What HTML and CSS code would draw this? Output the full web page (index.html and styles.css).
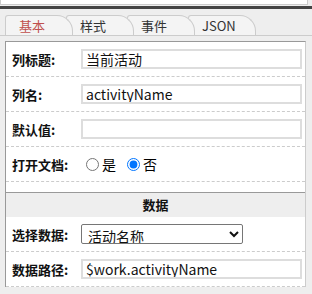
FILE: index.html
```html
<!DOCTYPE html>
<html>
<head>
<meta charset="utf-8">
<link rel="stylesheet" href="styles.css">
</head>
<body>
<div class="topbox"></div>
<div class="darkbar"></div>
<div class="tabs">
  <div class="tab active">基本</div>
  <div class="tab t2">样式</div>
  <div class="tab t3">事件</div>
  <div class="tab t4">JSON</div>
</div>
<div class="panel">
  <div class="row">
    <div class="label">列标题:</div>
    <input class="field" type="text" value="当前活动">
  </div>
  <div class="row">
    <div class="label">列名:</div>
    <input class="field" type="text" value="activityName">
  </div>
  <div class="row">
    <div class="label">默认值:</div>
    <input class="field" type="text" value="">
  </div>
  <div class="row">
    <div class="label">打开文档:</div>
    <label class="radio"><input type="radio" name="doc">是</label>
    <label class="radio"><input type="radio" name="doc" checked>否</label>
  </div>
  <div class="spacer"></div>
  <div class="section">数据</div>
  <div class="row">
    <div class="label">选择数据:</div>
    <select class="sel"><option>活动名称</option></select>
  </div>
  <div class="row">
    <div class="label">数据路径:</div>
    <input class="field" type="text" value="$work.activityName">
  </div>
</div>
</body>
</html>
```
FILE: styles.css
```css
html, body {
  margin: 0;
  padding: 0;
  background: #eeeeee;
  font-family: "Noto Sans CJK SC", "Noto Sans", sans-serif;
  overflow: hidden;
}
.topbox {
  width: 306px;
  height: 4px;
  background: #fff;
  border: 1px solid #cccccc;
  border-top: none;
}
.darkbar {
  margin-top: 1px;
  height: 3px;
  background: #444444;
}
.tabs {
  display: flex;
  margin-top: 6px;
  padding-left: 5px;
  height: 20px;
  border-bottom: 1px solid #cccccc;
}
.tab {
  position: relative;
  flex: none;
  width: 53px;
  height: 19px;
  padding-left: 13px;
  border: 1px solid #cccccc;
  border-bottom: none;
  border-radius: 3px 16px 0 0;
  background: #f4f4f4;
  font-size: 13px;
  line-height: 19px;
  color: #333;
  margin-right: -7px;
}
.tab.active { color: #c0504d; z-index: 4; }
.tab.t2 { z-index: 3; }
.tab.t3 { z-index: 2; }
.tab.t4 { z-index: 1; }
.panel {
  margin-top: 5px;
  margin-left: 5px;
  width: 299px;
  background: #fff;
  border-top: 1px solid #999999;
  border-left: 1px solid #999999;
  border-right: 1px solid #cccccc;
}
.row {
  display: flex;
  align-items: center;
  height: 34px;
  border-bottom: 1px dashed #cccccc;
}
.label {
  width: 69px;
  padding-left: 6px;
  font-size: 13px;
  font-weight: bold;
  color: #111;
  flex: none;
}
.field {
  box-sizing: border-box;
  width: 221px;
  height: 20px;
  margin: 0;
  padding: 0 3px;
  border: 1px solid #dddddd;
  border-width: 2px 2px 2px 2px;
  font-family: "Noto Sans CJK SC", "Noto Sans", sans-serif;
  font-size: 14px;
  color: #111;
  outline: none;
}
.radio {
  display: flex;
  align-items: center;
  font-size: 14px;
  margin-right: 6px;
}
.radio input {
  margin: 0 3px 0 5px;
  width: 13px;
  height: 13px;
}
.spacer { height: 10px; }
.section {
  height: 24px;
  line-height: 24px;
  background: #eeeeee;
  border-top: 1px solid #999999;
  text-align: center;
  font-size: 13px;
  font-weight: bold;
  color: #111;
}
.sel {
  box-sizing: border-box;
  width: 162px;
  height: 20px;
  margin: 0;
  padding: 0 2px;
  border: 1px solid #767676;
  border-radius: 2px;
  background: #fff;
  font-family: "Noto Sans CJK SC", "Noto Sans", sans-serif;
  font-size: 14px;
  color: #111;
}
```
